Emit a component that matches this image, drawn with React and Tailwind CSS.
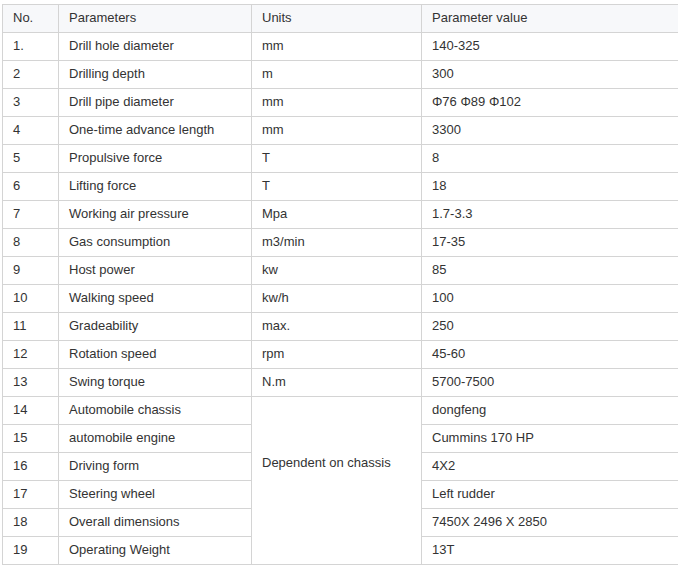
import React from 'react';

const rows = [
    ['1.', 'Drill hole diameter', 'mm', '140-325'],
    ['2', 'Drilling depth', 'm', '300'],
    ['3', 'Drill pipe diameter', 'mm', 'Φ76 Φ89 Φ102'],
    ['4', 'One-time advance length', 'mm', '3300'],
    ['5', 'Propulsive force', 'T', '8'],
    ['6', 'Lifting force', 'T', '18'],
    ['7', 'Working air pressure', 'Mpa', '1.7-3.3'],
    ['8', 'Gas consumption', 'm3/min', '17-35'],
    ['9', 'Host power', 'kw', '85'],
    ['10', 'Walking speed', 'kw/h', '100'],
    ['11', 'Gradeability', 'max.', '250'],
    ['12', 'Rotation speed', 'rpm', '45-60'],
    ['13', 'Swing torque', 'N.m', '5700-7500'],
];

const chassisRows = [
    ['14', 'Automobile chassis', 'dongfeng'],
    ['15', 'automobile engine', 'Cummins 170 HP'],
    ['16', 'Driving form', '4X2'],
    ['17', 'Steering wheel', 'Left rudder'],
    ['18', 'Overall dimensions', '7450X 2496 X 2850'],
    ['19', 'Operating Weight', '13T'],
];

const cell = 'border border-[#d4d4d4] h-[28px] px-[10px] pt-0 pb-[2px] align-middle text-left font-normal';
const lastCell = 'border border-r-0 border-[#d4d4d4] h-[28px] px-[10px] pt-0 pb-[2px] align-middle text-left font-normal';

export default function App() {
    return (
        <div className="pt-[4px] pl-[2px] bg-white min-h-[570px]">
            <table
                className="border-collapse table-fixed w-[675px] text-[13px] leading-[18px] text-[#333]"
                style={{ fontFamily: '"Liberation Sans", Arial, sans-serif' }}
            >
                <colgroup>
                    <col className="w-[56px]" />
                    <col className="w-[193px]" />
                    <col className="w-[170px]" />
                    <col className="w-[256px]" />
                </colgroup>
                <thead>
                    <tr className="bg-[#f7f8fa]">
                        <th className={cell}>No.</th>
                        <th className={cell}>Parameters</th>
                        <th className={cell}>Units</th>
                        <th className={lastCell}>Parameter value</th>
                    </tr>
                </thead>
                <tbody>
                    {rows.map((r) => (
                        <tr key={r[0]}>
                            <td className={cell}>{r[0]}</td>
                            <td className={cell}>{r[1]}</td>
                            <td className={cell}>{r[2]}</td>
                            <td className={lastCell}>{r[3]}</td>
                        </tr>
                    ))}
                    {chassisRows.map((r, i) => (
                        <tr key={r[0]}>
                            <td className={cell}>{r[0]}</td>
                            <td className={cell}>{r[1]}</td>
                            {i === 0 && (
                                <td
                                    rowSpan={6}
                                    className="border border-[#d4d4d4] px-[10px] pt-[57px] pb-0 align-top"
                                >
                                    Dependent on chassis
                                </td>
                            )}
                            <td className={lastCell}>{r[2]}</td>
                        </tr>
                    ))}
                </tbody>
            </table>
        </div>
    );
}
